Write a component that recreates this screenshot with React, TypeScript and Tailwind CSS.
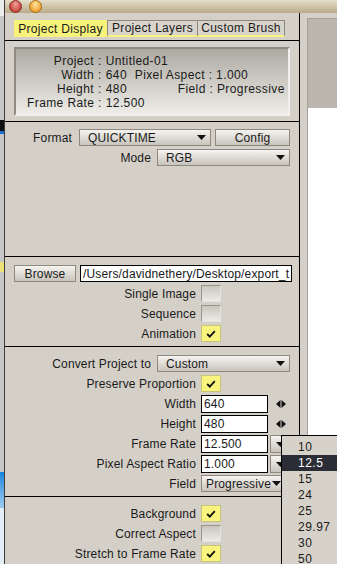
import type { ReactNode } from "react";

const FONT = "font-['Liberation_Sans',Arial,sans-serif]";

function Triangle() {
  return (
    <svg width="9" height="5" viewBox="0 0 9 5" className="shrink-0">
      <path d="M0 0 H9 L4.5 5 Z" fill="#111" />
    </svg>
  );
}

function Check() {
  return (
    <svg width="10" height="8" viewBox="0 0 10 8">
      <path d="M1.2 4 L3.8 6.6 L8.8 1.2" stroke="#111" strokeWidth="1.8" fill="none" />
    </svg>
  );
}

function Arrows() {
  return (
    <svg width="10" height="8" viewBox="0 0 10 8" className="shrink-0">
      <path d="M0 4 L4.5 0 V8 Z" fill="#111" />
      <path d="M5.5 0 L10 4 L5.5 8 Z" fill="#111" />
    </svg>
  );
}

function Select({ value, width }: { value: string; width: string }) {
  return (
    <div
      className={`${width} flex h-[17px] items-center justify-between border border-[#8d8981] bg-linear-to-b from-[#f6f4f0] to-[#c8c4bc] pl-[8px] pr-[4px]`}
    >
      <span className="truncate">{value}</span>
      <Triangle />
    </div>
  );
}

function Button({ label, width }: { label: string; width: string }) {
  return (
    <div
      className={`${width} flex h-[17px] items-center justify-center border border-[#8d8981] bg-linear-to-b from-[#f6f4f0] to-[#c8c4bc]`}
    >
      {label}
    </div>
  );
}

function Box({ checked }: { checked?: boolean }) {
  return checked ? (
    <div className="flex h-[17px] w-[20px] items-center justify-center border border-[#c8c47a] bg-[#f8f47e]">
      <Check />
    </div>
  ) : (
    <div className="h-[17px] w-[20px] border border-t-[#9a968e] border-l-[#9a968e] border-r-[#e4e2dc] border-b-[#e4e2dc] bg-linear-to-b from-[#c9c5bd] to-[#ecebe6]" />
  );
}

function Field({ value, width = "w-[67px] h-[18px]" }: { value: string; width?: string }) {
  return (
    <div className={`${width} flex items-center overflow-hidden whitespace-nowrap border border-black bg-white pl-[2px]`}>
      {value}
    </div>
  );
}

function Row({ label, labelW, gap, children }: { label: string; labelW: string; gap: string; children: ReactNode }) {
  return (
    <div className="flex h-[20px] items-start">
      <div className={`${labelW} flex h-[17px] items-center justify-end whitespace-nowrap`}>{label}</div>
      <div className={`${gap} flex items-start`}>{children}</div>
    </div>
  );
}

function CheckRow({ label, checked }: { label: string; checked?: boolean }) {
  return (
    <Row label={label} labelW="w-[191px]" gap="ml-[5px]">
      <Box checked={checked} />
    </Row>
  );
}

function DropButton() {
  return (
    <div className="ml-[2px] flex h-[18px] w-[20px] items-center justify-end border border-[#8d8981] bg-linear-to-b from-[#f6f4f0] to-[#c8c4bc] pr-[4px]">
      <Triangle />
    </div>
  );
}

const RATES = ["10", "12.5", "15", "24", "25", "29.97", "30", "50"];

export default function App() {
  return (
    <div
      className={`${FONT} relative flex h-[564px] w-[337px] overflow-hidden bg-[#d4d0c8] text-[12px] tracking-[0.15px] text-[#1a1a1a]`}
    >
      {/* edge of the window behind */}
      <div className="flex w-[5px] shrink-0 flex-col border-r border-[#3c3c3c] bg-[#c6c6c6]">
        <div className="h-[16px] bg-[#ececec]" />
        <div className="h-[104px]" />
        <div className="h-[14px] border-b-[3px] border-[#1a70d0] bg-[#111]" />
        <div className="h-[128px]" />
        <div className="h-[10px] bg-[#efe07a]" />
        <div className="h-[200px]" />
        <div className="h-[36px] bg-linear-to-b from-[#0a86e0] to-[#9ccdf0]" />
        <div className="flex-1 bg-[#e4eef6]" />
      </div>

      <div className="flex flex-1 flex-col">
        {/* title bar */}
        <div className="flex h-[16px] items-center gap-[7px] bg-linear-to-b from-[#e6dfcc] to-[#b9aa88] pl-[4px]">
          <div className="h-[13px] w-[13px] rounded-full border border-[#8a2a22] bg-radial-[at_50%_30%] from-[#f4a098] to-[#b0201a]" />
          <div className="h-[13px] w-[13px] rounded-full border border-[#a86a10] bg-radial-[at_50%_30%] from-[#ffe39a] to-[#e88a10]" />
        </div>

        <div className="flex flex-1">
          {/* main panel */}
          <div className="flex w-[295px] shrink-0 flex-col border-r border-black">
            {/* tabs */}
            <div className="flex h-[28px] items-start border-b border-black pl-[9px] pt-[7px] tracking-[0.3px]">
              <div className="flex h-[17px] w-[93px] items-center justify-center bg-[#f6f27a]">Project Display</div>
              <div className="flex h-[17px] w-[91px] items-center justify-center border-x border-t border-b-2 border-[#8c8882] border-b-[#f6f27a] bg-[#d8d4cc]">
                Project Layers
              </div>
              <div className="flex h-[17px] w-[87px] items-center justify-center border-r border-t border-b-2 border-[#8c8882] border-b-[#f6f27a] bg-[#d8d4cc]">
                Custom Brush
              </div>
            </div>

            {/* project info */}
            <div className="h-[81px] border-b border-black pl-[9px] pt-[6px]">
              <div className="flex h-[69px] w-[276px] flex-col justify-center whitespace-nowrap border-2 border-t-[#8e8a84] border-l-[#8e8a84] border-r-[#f2f0ec] border-b-[#f2f0ec] bg-linear-to-b from-[#adaaa2] to-[#efede8] pl-[11px] leading-[14px] tracking-[0.4px]">
                <div className="flex">
                  <span className="w-[67px] text-right">Project</span>
                  <span className="px-[4px]">:</span>
                  <span>Untitled-01</span>
                </div>
                <div className="flex">
                  <span className="w-[67px] text-right">Width</span>
                  <span className="px-[4px]">:</span>
                  <span className="w-[29px]">640</span>
                  <span>Pixel Aspect : 1.000</span>
                </div>
                <div className="flex">
                  <span className="w-[67px] text-right">Height</span>
                  <span className="px-[4px]">:</span>
                  <span className="w-[72px]">480</span>
                  <span>Field : Progressive</span>
                </div>
                <div className="flex">
                  <span className="w-[67px] text-right">Frame Rate</span>
                  <span className="px-[4px]">:</span>
                  <span>12.500</span>
                </div>
              </div>
            </div>

            {/* format */}
            <div className="h-[135px] border-b border-black pt-[7px]">
              <Row label="Format" labelW="w-[67px]" gap="ml-[7px] gap-[4px]">
                <Select value="QUICKTIME" width="w-[132px]" />
                <Button label="Config" width="w-[75px]" />
              </Row>
              <Row label="Mode" labelW="w-[146px]" gap="ml-[6px]">
                <Select value="RGB" width="w-[133px]" />
              </Row>
            </div>

            {/* output */}
            <div className="h-[90px] border-b border-black pt-[8px]">
              <div className="flex h-[20px] items-start pl-[9px]">
                <Button label="Browse" width="w-[62px]" />
                <div className="ml-[4px]">
                  <Field value="/Users/davidnethery/Desktop/export_t" width="w-[212px] h-[17px]" />
                </div>
              </div>
              <CheckRow label="Single Image" />
              <CheckRow label="Sequence" />
              <CheckRow label="Animation" checked />
            </div>

            {/* convert */}
            <div className="h-[150px] border-b border-black pt-[8px]">
              <Row label="Convert Project to" labelW="w-[146px]" gap="ml-[6px]">
                <Select value="Custom" width="w-[133px]" />
              </Row>
              <CheckRow label="Preserve Proportion" checked />
              <Row label="Width" labelW="w-[191px]" gap="ml-[5px]">
                <Field value="640" />
                <div className="ml-[8px] flex h-[18px] items-center">
                  <Arrows />
                </div>
              </Row>
              <Row label="Height" labelW="w-[191px]" gap="ml-[5px]">
                <Field value="480" />
                <div className="ml-[8px] flex h-[18px] items-center">
                  <Arrows />
                </div>
              </Row>
              <Row label="Frame Rate" labelW="w-[191px]" gap="ml-[5px]">
                <Field value="12.500" />
                <DropButton />
              </Row>
              <Row label="Pixel Aspect Ratio" labelW="w-[191px]" gap="ml-[5px]">
                <Field value="1.000" />
                <DropButton />
              </Row>
              <Row label="Field" labelW="w-[191px]" gap="ml-[5px]">
                <div className="flex h-[17px] w-[89px] items-center justify-between border border-[#8d8981] bg-linear-to-b from-[#f6f4f0] to-[#c8c4bc] pl-[4px] pr-[8px]">
                  <span>Progressive</span>
                  <Triangle />
                </div>
              </Row>
            </div>

            {/* options */}
            <div className="flex-1 pt-[8px]">
              <CheckRow label="Background" checked />
              <CheckRow label="Correct Aspect" />
              <CheckRow label="Stretch to Frame Rate" checked />
            </div>
          </div>

          {/* area to the right */}
          <div className="flex flex-1 flex-col pl-[7px] pt-[5px]">
            <div className="h-[90px] border-l border-t border-[#a6a29a] bg-[#bab6ae]" />
            <div className="flex-1 border-l border-[#a6a29a] bg-white" />
          </div>
        </div>
      </div>

      {/* frame rate popup */}
      <div className="absolute left-[281px] top-[435px] h-[140px] w-[60px] border-l border-t border-black bg-[#d6d2ca] pt-[3px] tracking-[0.5px]">
        {RATES.map((rate) => (
          <div
            key={rate}
            className={
              rate === "12.5"
                ? "flex h-[16px] items-center bg-[#2a2d35] pl-[16px] text-white"
                : "flex h-[16px] items-center pl-[16px]"
            }
          >
            {rate}
          </div>
        ))}
      </div>
    </div>
  );
}
